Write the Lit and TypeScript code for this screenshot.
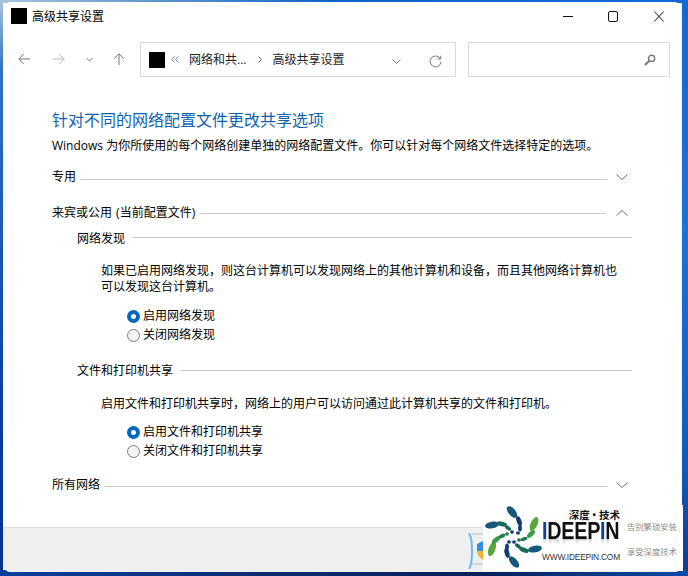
import { LitElement, html, css, svg } from 'lit';
import { customElement } from 'lit/decorators.js';

// [cx, cy, rx, ry, rotation, colour], page coordinates minus the logo panel origin
const LOGO_DOTS: [number, number, number, number, number, string][] = [
  [29, 7, 7, 3.6, 50, '#15587a'], [36, 16, 5, 2.4, 70, '#123a78'], [37, 23, 3.5, 1.9, 90, '#123a78'], [35, 28, 2, 1.8, 0, '#123a78'],
  [51, 19, 7.5, 3.4, -65, '#5aa83c'], [48, 29, 5, 2.4, -45, '#3d9a48'], [41, 34, 3.5, 1.9, -20, '#1f7a50'], [36, 35, 1.9, 1.7, 0, '#1f7a50'],
  [52, 44, 7, 3.4, -10, '#15587a'], [41, 45, 5, 2.4, 20, '#176a5c'], [35, 41, 3.5, 1.9, 40, '#176a5c'], [31, 37, 1.9, 1.7, 0, '#123a78'],
  [31, 57, 7, 3.4, 50, '#15587a'], [24, 48, 5, 2.4, 75, '#123a78'], [24, 42, 3.5, 1.9, 90, '#123a78'], [26, 37, 1.9, 1.7, 0, '#123a78'],
  [9, 44, 7.5, 3.4, -70, '#5aa83c'], [13, 35, 5, 2.4, -40, '#3d9a48'], [19, 31, 3.5, 1.9, -25, '#1f7a50'], [24, 29, 1.9, 1.7, 0, '#1f7a50'],
  [9, 20, 7, 3.4, -10, '#15587a'], [19, 19, 5, 2.4, 15, '#176a5c'], [25, 23, 3.5, 1.9, 35, '#176a5c'], [29, 27, 1.9, 1.7, 0, '#123a78'],
];

const chevron = (up = false) => html`<svg class="chev" width="12" height="12" viewBox="0 0 12 12" fill="none" stroke="#6e6e6e" stroke-width="1">
  <path d=${up ? 'M.5 8.5 6 3.5l5.5 5' : 'M.5 3.5 6 8.5l5.5-5'}></path></svg>`;

@customElement('app-root')
export class AppRoot extends LitElement {
  static styles = css`
    :host {
      display: block;
      position: relative;
      width: 688px;
      height: 576px;
      overflow: hidden;
      font-family: "Open Sans", "Noto Sans CJK SC", sans-serif;
      font-size: 12px;
      line-height: 16px;
      color: #000;
    }
    .desktop {
      box-sizing: border-box;
      height: 576px;
      padding: 2px 6px 4px 3px;
      background:
        linear-gradient(90deg, #a9c4dc 0, #5f97cf 22%, #0f62c8 48%, #1467d8 100%) top / 100% 3px no-repeat,
        linear-gradient(90deg, #0a3f9e 0, #0a2a6e 40%, #071f5c 70%, #0d4aa8 100%) bottom / 100% 6px no-repeat,
        linear-gradient(180deg, #a9c4dc 0, #2f74c4 12%, #0a3fa8 70%, #0a2f90 100%) left / 3px 100% no-repeat,
        linear-gradient(180deg, #1467d8 0, #1a72dc 40%, #0f5cc0 80%, #0b3c90 100%) right / 6px 100% no-repeat;
    }
    .window {
      display: flex;
      flex-direction: column;
      height: 570px;
      background: #fff;
      border-radius: 8px;
      overflow: hidden;
    }
    .titlebar {
      display: flex;
      align-items: center;
      flex: none;
      height: 28px;
      padding: 0 18px 0 8px;
    }
    .app-icon { flex: none; width: 16px; height: 16px; background: #000; }
    .titlebar .title { margin: 2px 0 0 5px; flex: 1; color: #000; }
    .controls { display: flex; }
    .controls svg { display: block; }
    .controls svg + svg { margin-left: 35px; }
    .controls svg:last-child { margin-left: 36px; }
    .nav {
      display: flex;
      align-items: center;
      flex: none;
      height: 35px;
      margin-top: 12px;
      padding: 0 12px 0 15px;
    }
    .nav-btns { display: flex; align-items: center; width: 122px; flex: none; margin-bottom: 1px; }
    .nav-btns svg { display: block; flex: none; }
    .box {
      box-sizing: border-box;
      display: flex;
      align-items: center;
      height: 35px;
      background: #fff;
      border: 1px solid #d9d9d9;
    }
    .address { width: 316px; flex: none; padding: 0 13px 0 8px; color: #222; }
    .address .app-icon { margin-right: 6px; }
    .crumb-sep { flex: none; color: #7a7a7a; }
    .crumb-first { margin-left: 10px; }
    .crumb-arrow { margin: 0 10px 0 12px; }
    .address .grow { flex: 1; }
    .address .dd { margin: 4px 28px 0 0; }
    .address .refresh { margin-top: 3px; }
    .search { width: 202px; flex: none; margin-left: 12px; justify-content: flex-end; padding-right: 13px; }
    .search svg { margin-top: 1px; }
    .content {
      flex: 1;
      padding: 32px 50px 0 49px;
    }
    .heading { font-size: 16px; line-height: 22px; color: #0f62b0; }
    .desc { margin-top: 7px; white-space: nowrap; }
    .row { display: flex; align-items: center; gap: 5px; }
    .row .rule { flex: 1; height: 1px; background: #c8c8c8; }
    .outer { margin-right: 4px; }
    .outer.open { gap: 6px; word-spacing: 1px; }
    .outer .chev { margin-left: 4px; flex: none; }
    .inner { margin-left: 25px; gap: 8px; }
    .para { margin-left: 49px; white-space: pre-line; }
    .radio-row { display: flex; align-items: center; gap: 3px; margin: 3px 0 0 75px; }
    .radio {
      box-sizing: border-box;
      flex: none;
      width: 13px;
      height: 13px;
      border: 1px solid #7a7a7a;
      border-radius: 50%;
      background: #f4f4f4;
    }
    .radio.on { border: 4px solid #0067c0; background: #fff; }
    .footer {
      flex: none;
      height: 45px;
      box-sizing: border-box;
      background: #efefef;
      border-top: 1px solid #dcdcdc;
      padding: 5px 0 0 465px;
    }
    .uac { display: block; }
    .logo {
      position: absolute;
      left: 483px;
      top: 505px;
      width: 200px;
      height: 66px;
      box-sizing: border-box;
      display: flex;
      background: #fff;
      color: #111;
      font-family: "Liberation Sans", "Noto Sans CJK SC", sans-serif;
    }
    .mark { display: block; flex: none; }
    .wordmark { width: 78px; flex: none; margin-left: -1px; display: flex; flex-direction: column; }
    .cn-name {
      font-family: "Noto Sans CJK SC", sans-serif;
      font-weight: 700;
      font-size: 10.5px;
      line-height: 11px;
      margin-top: 4px;
      text-align: right;
      word-spacing: -3px;
      white-space: nowrap;
    }
    .brand {
      font-family: "Liberation Sans", sans-serif;
      font-weight: 700;
      font-size: 23px;
      line-height: 18px;
      height: 18px;
      margin-top: 2px;
      letter-spacing: -.3px;
      transform: scaleX(.86);
      transform-origin: left top;
      white-space: nowrap;
      -webkit-box-reflect: below -3px linear-gradient(transparent 55%, rgba(0, 0, 0, .28));
    }
    .brand b { color: #12408c; }
    .url { font-size: 8.4px; line-height: 10px; margin-top: 12px; white-space: nowrap; letter-spacing: -.2px; color: #333; }
    .tags {
      display: flex;
      flex-direction: column;
      gap: 15px;
      margin: 16px 0 0 7px;
      font-family: "Noto Sans CJK SC", sans-serif;
      font-size: 8.3px;
      line-height: 10px;
      color: #8a8a8a;
      white-space: nowrap;
    }
  `;

  private radio(label: string, on: boolean, gap = 0) {
    const style = gap ? `margin-top:${gap}px` : '';
    return html`<div class="radio-row" style=${style}><span class="radio ${on ? 'on' : ''}"></span><span>${label}</span></div>`;
  }

  // shift nudges the rule off the text's centre line, as the dialog's group boxes do
  private row(label: string, gap: number, kind: 'outer' | 'inner', shift = 0, open = false) {
    return html`<div class="row ${kind} ${open ? 'open' : ''}" style="margin-top:${gap}px">
      <span>${label}</span><span class="rule" style="margin-top:${shift * 2}px"></span>${kind === 'outer' ? chevron(open) : ''}
    </div>`;
  }

  render() {
    return html`
      <div class="desktop">
        <div class="window">
          <div class="titlebar">
            <span class="app-icon"></span>
            <span class="title">高级共享设置</span>
            <div class="controls">
              <svg width="10" height="11" viewBox="0 0 10 11" stroke="#111" fill="none"><path d="M0 5.5h10"></path></svg>
              <svg width="10" height="11" viewBox="0 0 10 11" stroke="#111" fill="none"><rect x=".5" y=".5" width="9" height="10" rx="1.5"></rect></svg>
              <svg width="10" height="11" viewBox="0 0 10 11" stroke="#111" fill="none"><path d="m.3.5 9.4 10m0-10L.3 10.5"></path></svg>
            </div>
          </div>
          <div class="nav">
            <div class="nav-btns">
              <svg width="12" height="12" viewBox="0 0 12 12" fill="none" stroke="#777"><path d="M12 6H.8M5.8 1 .8 6l5 5"></path></svg>
              <svg style="margin-left:23px" width="12" height="12" viewBox="0 0 12 12" fill="none" stroke="#b8b8b8"><path d="M0 6h11.2M6.2 1l5 5-5 5"></path></svg>
              <svg style="margin-left:21px" width="7" height="5" viewBox="0 0 7 5" fill="none" stroke="#777"><path d="m.5 1 3 3 3-3"></path></svg>
              <svg style="margin-left:20px" width="12" height="12" viewBox="0 0 12 12" fill="none" stroke="#777"><path d="M6 12V.8M1 5.8l5-5 5 5"></path></svg>
            </div>
            <div class="box address">
              <span class="app-icon"></span>
              <svg class="crumb-sep" width="8" height="7" viewBox="0 0 8 7" fill="none" stroke="#8a8a8a"><path d="M3.5.5.8 3.5l2.7 3M7.3.5 4.6 3.5l2.7 3"></path></svg>
              <span class="crumb-first">网络和共...</span>
              <svg class="crumb-sep crumb-arrow" width="4" height="7" viewBox="0 0 4 7" fill="none" stroke="#666"><path d="m.5.5 3 3-3 3"></path></svg>
              <span>高级共享设置</span>
              <span class="grow"></span>
              <svg class="dd" width="9" height="5" viewBox="0 0 9 5" fill="none" stroke="#777"><path d="m.5.5 4 4 4-4"></path></svg>
              <svg class="refresh" width="13" height="13" viewBox="0 0 13 13" fill="none" stroke="#8a8a8a" stroke-width="1.1"><path d="M11.2 3.6A5.4 5.4 0 1 0 12 6.5"></path><path d="M11.6.8v3.2H8.4"></path></svg>
            </div>
            <div class="box search">
              <svg width="12" height="12" viewBox="0 0 12 12" fill="none" stroke="#777"><circle cx="7.6" cy="4.4" r="3.1" stroke-width="1.4"></circle><path d="M5.3 6.7 1 11" stroke-width="2"></path></svg>
            </div>
          </div>
          <div class="content">
            <div class="heading">针对不同的网络配置文件更改共享选项</div>
            <div class="desc">Windows 为你所使用的每个网络创建单独的网络配置文件。你可以针对每个网络文件选择特定的选项。</div>
            ${this.row('专用', 15, 'outer', 2)}
            ${this.row('来宾或公用 (当前配置文件)', 20, 'outer', 0, true)}
            ${this.row('网络发现', 10, 'inner', -2)}
            <div class="para" style="margin-top:16px">如果已启用网络发现，则这台计算机可以发现网络上的其他计算机和设备，而且其他网络计算机也
可以发现这台计算机。</div>
            ${this.radio('启用网络发现', true, 13)}
            ${this.radio('关闭网络发现', false)}
            ${this.row('文件和打印机共享', 20, 'inner', -1)}
            <div class="para" style="margin-top:17px">启用文件和打印机共享时，网络上的用户可以访问通过此计算机共享的文件和打印机。</div>
            ${this.radio('启用文件和打印机共享', true, 12)}
            ${this.radio('关闭文件和打印机共享', false)}
            ${this.row('所有网络', 18, 'outer', 1)}
          </div>
          <div class="footer">
            <svg class="uac" width="18" height="36" viewBox="0 0 18 36" fill="none">
              <path d="M1 0c2 3 3 6 3 18s-1 15-3 18" stroke="#6db8ef" stroke-width="2"></path>
              <path d="M4 1h14M4 31h14" stroke="#bbb"></path>
              <path d="M15 8 9 11v7h6z" fill="#2f8fe0"></path>
              <path d="M9 18c0 4 3 7 6 9v-9z" fill="#f2b632"></path>
              <path d="M15 8v10h3V9z" fill="#f2b632"></path>
            </svg>
          </div>
        </div>
      </div>
      <div class="logo">
        <svg class="mark" width="60" height="66" viewBox="0 0 60 66">
          ${LOGO_DOTS.map(([cx, cy, rx, ry, rot, fill]) =>
            svg`<ellipse cx=${cx} cy=${cy} rx=${rx} ry=${ry} fill=${fill} transform="rotate(${rot} ${cx} ${cy})"></ellipse>`)}
        </svg>
        <div class="wordmark">
          <div class="cn-name">深度 · 技术</div>
          <div class="brand"><b>I</b>DEEP<b>I</b>N</div>
          <div class="url">WWW.IDEEPIN.COM</div>
        </div>
        <div class="tags"><span>告别繁琐安装</span><span>享受深度技术</span></div>
      </div>
    `;
  }
}
